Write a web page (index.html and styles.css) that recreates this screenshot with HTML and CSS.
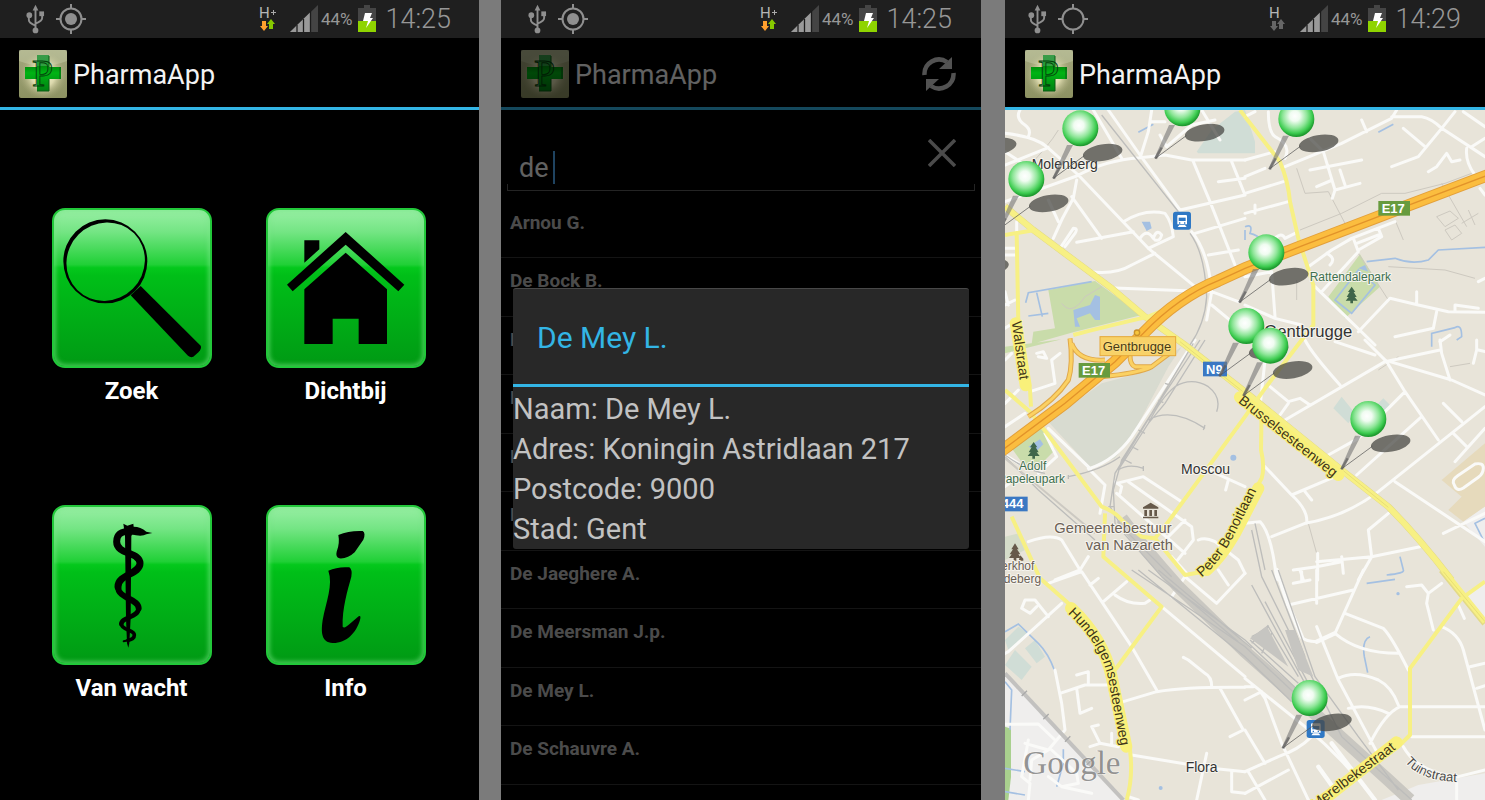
FILE: index.html
```html
<!DOCTYPE html>
<html lang="nl">
<head>
<meta charset="utf-8">
<title>PharmaApp</title>
<link rel="stylesheet" href="styles.css">
</head>
<body>
<svg class="defs" aria-hidden="true">
  <defs>
    <linearGradient id="logo-bg" x1="0" y1="0" x2="0" y2="1"><stop offset="0" stop-color="#a3a77e"/><stop offset="1" stop-color="#8d9262"/></linearGradient>
    <radialGradient id="logo-glow"><stop offset="0" stop-color="#fffde0"/><stop offset=".5" stop-color="#dcd9ad"/><stop offset="1" stop-color="#a3a475" stop-opacity="0"/></radialGradient>
    <linearGradient id="cross" x1="0" y1="0" x2="0" y2="1"><stop offset="0" stop-color="#3a9b49"/><stop offset=".3" stop-color="#2fa041"/><stop offset=".32" stop-color="#008f0d"/><stop offset=".5" stop-color="#00b414"/><stop offset="1" stop-color="#008012"/></linearGradient>
    <radialGradient id="ball" cx=".46" cy=".42" r=".56"><stop offset="0" stop-color="#fff"/><stop offset=".25" stop-color="#f0fcf1"/><stop offset=".6" stop-color="#8fe699"/><stop offset=".85" stop-color="#3dcc50"/><stop offset="1" stop-color="#1f9c30"/></radialGradient>
  </defs>
  <symbol id="usb" viewBox="0 0 20 30">
    <g fill="none" stroke="#8f8f8f" stroke-width="2"><path d="M10 5V26M3 11v5q0 3 7 6M17 9v5q0 3 -7 6"/></g>
    <g fill="#8f8f8f"><path d="M10 0l3 6H7z"/><circle cx="3.500" cy="11" r="3"/><path d="M14 7h5v5h-5z"/><circle cx="10" cy="27" r="3"/></g>
  </symbol>
  <symbol id="gps" viewBox="0 0 30 30">
    <g fill="none" stroke="#8f8f8f" stroke-width="2"><circle cx="15" cy="15" r="10.500"/><path d="M15 0v5M15 25v5M0 15h5M25 15h5"/></g>
  </symbol>
  <symbol id="signal" viewBox="0 0 28 27">
    <path d="M0 27L28 0V27z" fill="#444"/><path d="M0 27L20 7.500V27z" fill="#9a9a9a"/>
    <path d="M7 20v7M13.500 14v13M20.500 6v21" stroke="#1c1c1c" stroke-width="1.300"/>
  </symbol>
  <symbol id="battery" viewBox="0 0 18 27">
    <path d="M6 0h6v3h6v13H0V3h6z" fill="#454545"/><path d="M0 16h18v11H0z" fill="#8fd400"/>
    <path d="M7 8h7l-2 5h3L8 23l2-7H5z" fill="#fff"/>
  </symbol>
  <symbol id="logo" viewBox="0 0 48 48">
    <rect width="48" height="48" rx="2" fill="url(#logo-bg)"/><circle cx="24" cy="25" r="24" fill="url(#logo-glow)"/>
    <path d="M0 0H48V11Q24 20 0 11z" fill="#dfe3c5" opacity=".3"/>
    <path d="M18 5H30V17H42V29H30V41H18V29H6V17H18z" fill="url(#cross)"/><path d="M18 41h12M30 6v11M30 29v12M41 17v12" stroke="#0a5a14" stroke-width="1"/>
    <text x="13" y="36" font-family="Liberation Serif, serif" font-size="38" fill="#07951a" fill-opacity=".3" stroke="#04400b" stroke-width=".9">P</text>
  </symbol>
</svg>

<main class="board">
  <section class="phone phone-menu">
    <div class="status">
      <svg class="ic-usb"><use href="#usb"/></svg>
      <svg class="ic-gps" viewBox="0 0 30 30"><use href="#gps"/><circle cx="15" cy="15" r="6" fill="#8f8f8f"/></svg>
      <svg class="ic-net" viewBox="0 0 18 27"><text class="net-text" x="0" y="13">H</text><path d="M12 7.500h5M14.500 5v5" stroke="#aaa"/><path d="M3 16h4v5h2l-4 5-4-5h2z" fill="#ffa02e"/><path d="M10 24h4v-5h2l-4-5-4 5h2z" fill="#86c800"/></svg>
      <svg class="ic-signal"><use href="#signal"/></svg>
      <span class="percent">44%</span>
      <svg class="ic-battery"><use href="#battery"/></svg>
      <time class="clock">14:25</time>
    </div>
    <header class="appbar"><svg class="logo"><use href="#logo"/></svg><h1>PharmaApp</h1></header>
    <nav class="menu">
      <button class="item"><span class="tile"><svg viewBox="0 0 480 480"><path fill-rule="evenodd" d="M160 34a126 126 0 1 1 0 252a126 126 0 1 1 0-252zM246 76a120 115 -45 0 0 -170 170a120 115 -45 0 0 170-170z"/><path d="M236 262L266 234L446 413Q450 420 440 432L424 446Q416 450 408 443z"/></svg></span><span class="label">Zoek</span></button>
      <button class="item"><span class="tile"><svg viewBox="0 0 480 480"><path d="M115 97H160V124L115 164zM239 72L415 230L397 250L239 110L80 250L63 230zM239 134L363 244V408H278V332H200V408H115V244z"/></svg></span><span class="label">Dichtbij</span></button>
      <button class="item"><span class="tile"><svg viewBox="0 0 480 480"><path d="M214 56l12 6 18-6 2 18 -8 20L236 340 232 415 229 428 225 415 222 340 219 90z"/><path d="M236 66Q262 62 283 80L301 84 283 88Q270 96 236 88z"/><g fill="none" stroke="#000" stroke-linecap="round"><path stroke-width="21" d="M240 78C200 78 194 92 194 110C194 150 264 140 264 175C264 208 198 208 198 245"/><path stroke-width="18" d="M198 245C198 282 260 280 260 310"/><path stroke-width="14" d="M260 310C260 338 208 336 208 357"/><path stroke-width="11" d="M208 357C208 376 247 374 247 390Q247 402 228 406"/><path stroke-width="6" d="M228 406L215 409"/></g></svg></span><span class="label">Van wacht</span></button>
      <button class="item"><span class="tile"><svg viewBox="0 0 480 480"><path d="M217 90Q250 76 290 78Q300 84 292 104L266 142Q245 162 220 160Q208 155 212 140Q222 115 217 90zM187 197Q215 184 250 187Q260 195 256 215C245 255 228 310 230 365Q235 372 250 358L278 334Q286 330 282 345C270 385 240 415 200 414C165 412 165 380 170 345C180 290 202 240 187 197z"/></svg></span><span class="label">Info</span></button>
    </nav>
  </section>

  <section class="phone phone-search">
    <div class="status">
      <svg class="ic-usb"><use href="#usb"/></svg>
      <svg class="ic-gps" viewBox="0 0 30 30"><use href="#gps"/><circle cx="15" cy="15" r="6" fill="#8f8f8f"/></svg>
      <svg class="ic-net" viewBox="0 0 18 27"><text class="net-text" x="0" y="13">H</text><path d="M12 7.500h5M14.500 5v5" stroke="#aaa"/><path d="M3 16h4v5h2l-4 5-4-5h2z" fill="#ffa02e"/><path d="M10 24h4v-5h2l-4-5-4 5h2z" fill="#86c800"/></svg>
      <svg class="ic-signal"><use href="#signal"/></svg>
      <span class="percent">44%</span>
      <svg class="ic-battery"><use href="#battery"/></svg>
      <time class="clock">14:25</time>
    </div>
    <header class="appbar"><svg class="logo"><use href="#logo"/></svg><h1>PharmaApp</h1>
      <button class="refresh" aria-label="Vernieuwen"><svg viewBox="0 0 34 34"><g fill="none" stroke="#ccc" stroke-width="4.500"><path d="M2.500 18A14.500 14.500 0 0 1 25 5"/><path d="M31.500 16A14.500 14.500 0 0 1 9 29"/></g><path d="M30 0V12H17zM4 34V22H17z" fill="#ccc"/></svg></button>
    </header>
    <div class="search">
      <div class="field"><input type="text" value="de " size="2" aria-label="Zoek apotheek"><i class="caret"></i></div>
      <button class="clear" aria-label="Wissen"><svg viewBox="0 0 28 28"><path d="M1 1L27 27M27 1L1 27" stroke="#bbb" stroke-width="3.500"/></svg></button>
    </div>
    <ul class="list">
      <li>Arnou G.</li><li>De Bock B.</li><li>De</li><li>De</li><li>De</li><li>De</li><li>De Jaeghere A.</li><li>De Meersman J.p.</li><li>De Mey L.</li><li>De Schauvre A.</li><li></li>
    </ul>
    <div class="scrim">
      <div class="dialog" role="dialog" aria-labelledby="dialog-title">
        <h2 id="dialog-title">De Mey L.</h2>
        <div class="details"><p>Naam: De Mey L.</p><p>Adres: Koningin Astridlaan 217</p><p>Postcode: 9000</p><p>Stad: Gent</p></div>
      </div>
    </div>
  </section>

  <section class="phone phone-map">
    <div class="status">
      <svg class="ic-usb"><use href="#usb"/></svg>
      <svg class="ic-gps" viewBox="0 0 30 30"><use href="#gps"/></svg>
      <svg class="ic-net" viewBox="0 0 18 27"><text class="net-text" x="0" y="13">H</text><path d="M3 16h4v5h2l-4 5-4-5h2zM10 24h4v-5h2l-4-5-4 5h2z" fill="#666"/></svg>
      <svg class="ic-signal"><use href="#signal"/></svg>
      <span class="percent">44%</span>
      <svg class="ic-battery"><use href="#battery"/></svg>
      <time class="clock">14:29</time>
    </div>
    <header class="appbar"><svg class="logo"><use href="#logo"/></svg><h1>PharmaApp</h1></header>
    <svg class="map" viewBox="0 0 1440 2070" preserveAspectRatio="xMinYMin slice" role="img" aria-label="Kaart van Gentbrugge">
      <defs>
        <g id="pin"><path d="M-40 50L-22 50-76 153-84 150z" fill="#777" opacity=".6"/><path d="M-81 150L12 82" stroke="#555" stroke-width="3" opacity=".7"/><path d="M-81 150L-62 118" stroke="#555" stroke-width="7" opacity=".6"/><ellipse cx="67" cy="73" rx="60" ry="25" transform="rotate(-10 67 73)" fill="#474743" opacity=".74"/><circle r="54" fill="url(#ball)"/></g>
        <g id="train"><rect width="54" height="54" rx="8" fill="#2f78c4"/><path d="M16 10h23q3 0 3 4v24h-29V14q0-4 3-4zM14 46l5-6h17l5 6z" fill="#fff"/><path d="M17 18h21v10H17z" fill="#2f78c4"/><path d="M18 34h4M33 34h4" stroke="#2f78c4" stroke-width="4"/></g>
        <g id="tree"><path d="M0-24L11-8H6L15 7H9L18 18H4V26H-4V18H-18L-9 7H-15L-6-8H-11z" fill="#3f664a"/></g>
        <path id="p-brus" d="M698 876L990 1108"/>
        <path id="p-hund" d="M188 1510Q285 1600 308 1700L350 1925"/>
        <path id="p-tuin" d="M1200 1955Q1245 2015 1370 2016"/>
        <path id="p-pet" d="M590 1402Q636 1366 680 1290L768 1115"/>
        <path id="p-mer" d="M932 2098L1205 1893"/>
        <path id="p-wal" d="M20 636L50 850"/>
      </defs>
      <rect width="1440" height="2070" fill="#e8e4d9"/>
      <g class="areas">
        <g fill="#c9dcaa"><path d="M130 540L270 513 410 615 210 665 80 702 85 665 150 655zM0 710L170 688 0 730zM1065 433L1125 530 1020 625 970 560zM20 1015L110 950 150 1020 100 1070 60 1070z"/></g>
        <g fill="#d0ddd6"><path d="M575 125L620 60 690 5 720 0 750 95V130L580 130zM1010 860L1050 910 1030 940 985 895zM1115 885l20-20 20 20-20 20zM0 1590L40 1550 70 1570 10 1620zM90 1590L120 1640 95 1660 60 1615zM30 1620L80 1670 50 1710 0 1665z"/></g>
        <path d="M130 935L290 820 420 785 530 710 490 770 380 980 330 1045 255 1070z" fill="#d8dbd0"/>
        <path d="M1440 1000L1310 1110 1370 1160 1330 1200 1375 1235 1440 1190z" fill="#e6dabc"/>
        <path d="M0 1690L360 2070H0zM1375 1235L1440 1190V1310zM1370 1465L1440 1415V1530zM1130 2070L1240 2025 1440 1990V2070z" fill="#efeeed"/>
        <path d="M0 1280l40-10 20 50-60 30z" fill="#d5dcc9"/>
        <path d="M0 1850L18 1856V2000L10 2070H0z" fill="#a9d08e"/>
      </g>
      <g class="water">
        <path d="M62 578L70 548 260 515M95 548L112 620M70 618L130 610M400 67L445 43M1085 455L1170 445Q1220 465 1270 450L1300 420 1440 412M1120 67L1165 43M0 1565L40 1542 100 1600Q130 1630 148 1680M0 1715L20 1740 15 1860M0 1975L60 1985M175 1918V1960L155 2030M1145 1395Q1200 1390 1195 1380L1185 1340M1085 1420L1170 1408M1095 1580Q1070 1590 1078 1640L1088 1688M1280 710V670L1350 653Q1370 640 1370 680L1355 690M1440 1225L1410 1240 1435 1290M720 350Q745 340 735 370Q780 380 770 420M0 2045L60 2055M720 360v30"/>
        <path class="loop" d="M1060 480L1110 525 1040 610 990 570z"/>
        <path class="pond" d="M205 600L255 585 270 555 285 560V630L270 630 255 610 215 625 225 650H210zM410 335l25 0 5 20-15 8zM1060 475l20-10 10 20zM70 1010l35-22 10 15-20 20z"/>
        <circle class="pond" cx="685" cy="1043" r="9"/><circle class="pond" cx="467" cy="2034" r="6"/><circle class="pond" cx="1179" cy="1451" r="5"/>
      </g>
      <g class="tracks">
        <path d="M885 360L1010 310 1130 250 1200 250 1320 220 1400 190M875 175L900 250 970 245 1020 340M1150 470L1320 480 1410 505M1295 320L1335 303 1360 325 1320 350zM1320 360l30-15 20 25-30 20zM1370 340l50-30M1390 300l20 45M1310 220L1385 350M1170 330L1195 390M1060 430L1150 570M875 570V510M170 580Q200 620 240 560L290 530M1120 780l60-40M1335 770l60-10M910 1240L935 1330M60 180Q130 110 160 60"/>
      </g>
      <g class="roads">
        <g transform="translate(0 -15)"><path d="M0 85Q90 95 125 125L220 210 430 430 570 545M45 15Q30 40 60 60 80 75 70 95M130 128L0 180M0 140L60 180M0 290L215 213Q300 165 405 158L480 150 560 165H720M265 15L350 160M310 15L405 150 525 315M440 15L430 80 408 150M200 275L290 400M215 225L205 280Q170 340 145 400M130 285L160 350M215 412L385 380M355 350Q420 310 480 325 500 350 505 395L430 430M405 400q20-30 40 0q10-30 25-10q-5 20-20 15M255 500Q330 510 380 480L450 445M570 385L720 340M525 315L720 270M565 170L615 290 690 480M680 170L720 270M610 450L700 435M560 380Q610 440 620 560L605 645M620 600L680 650M310 548L620 560 700 590M165 430L205 370q15 0 5 15L180 425M0 430H35M0 450H35M35 350V385M640 230L720 220M465 90L485 125 560 60 630 45M590 15L645 105M0 600l30-15M0 560l10 40M0 670l30-20M440 50h40"/></g>
        <g transform="translate(720 -15)"><path d="M0 215L60 190M120 185L290 115 440 40 455 15M440 35H530Q560 40 590 70L720 155M630 20L590 70 520 155 440 185M475 70L540 125M350 45L365 80M550 200L575 185 605 145 620 170 645 165M720 100L680 125M655 20L720 65M665 130Q660 170 690 210M195 100L235 140 270 255 262 280M195 195L350 165M215 245L255 228M285 195L300 240M270 255L345 235M0 265L115 230M0 325L130 290M30 325V300M70 20Q70 80 90 95 140 120 120 160M0 165L90 140M0 35L30 20M190 485L260 435 320 400 450 350M325 400L340 440 230 560M340 435L410 395 400 370M335 415L400 390M245 445q30 15 10 35M210 545L390 720M340 680L435 580 520 600 610 620 720 622M515 560V595M575 620L565 670 450 695M630 620V600L700 610M80 500L90 635M0 600L90 640 170 660M0 515L80 500M90 400q20-20 30 0L150 385M705 250l15 20M585 710l30-20M700 530l20-10"/></g>
        <g transform="translate(0 690)"><path d="M570 0L380 290Q330 360 255 385L130 265M75 155L150 130 140 60 165 40M95 40L115 35 125 55 100 50M0 190L40 150M0 60L20 40M0 260L60 220M250 385L300 435 285 520M0 345L40 370M100 400L155 350 120 280M335 430L415 410 530 485M370 425L560 560 565 600 510 670M335 460L540 640M490 590L540 540M580 600Q600 590 630 605L700 660 720 700M545 700L500 650M610 390L720 440M670 420L662 450M70 605Q140 580 170 600L225 690 150 720M0 440L20 425M330 425L350 440 345 460M225 690L250 650"/></g>
        <g transform="translate(720 690)"><path d="M180 0Q200 40 285 135M120 240L420 65 585 30M270 5L390 45 M435 65L620 120 720 165M360 0L425 65 480 155 580 300M585 0L590 40 615 120M695 0V30L685 70M700 30L720 35M250 345L340 295 480 155M335 405L530 230M720 200L400 455Q300 530 180 550L80 590M595 190L650 245M625 280L665 320M720 265L630 365M450 425L720 605M720 520L595 580M60 380L140 465Q190 510 185 550M140 465L270 410M180 455L200 480M0 550L45 545Q80 580 95 720M525 620L380 650 215 665M430 520L370 570 380 650 340 720M145 690L215 680 290 665M290 650L295 700M218 640V720M165 690l10 30M75 140L130 185 165 175 195 195M130 190L105 225M60 60L45 200"/><path d="M628 435q-10-15 10-28L690 372q25-5 25 12t-15 28l-45 32q-20 12-27-9z" fill="#d0ddd6"/></g>
        <g transform="translate(0 1380)"><path d="M130 40L230 5 380 230 455 360M295 95L365 35M330 75Q370 105 420 100L435 90M470 110L720 320M170 100L10 245 0 250M130 140L90 90 60 90 50 115 75 130 95 110M255 45L280 25M355 395L455 365Q550 350 720 352M645 355L715 480 675 500M620 350Q620 320 600 310L550 270 535 262M165 370L240 345 310 345M150 300L170 400 180 480 130 540M250 340V305L215 315M215 355L225 430 260 415M0 463L100 462 150 510M380 555L620 595 720 605M605 550L575 690M680 605V665L720 670M255 530L285 520 340 530M285 520L260 470 280 465M320 490V520M540 20L635 100 720 10M640 0L670 45M540 20L500 80M70 510L50 620 75 640 70 690M130 540L60 520M130 540L80 570 75 630M140 540L215 610 220 640 170 650 130 620M170 650L260 670M370 680L400 690"/></g>
        <g transform="translate(720 1380)"><path d="M95 0L130 105 170 200Q180 215 215 215L270 190 355 0M130 105L325 60M215 0V100M215 170L280 330 395 545M300 130L415 175Q440 200 490 300M270 190Q340 250 460 250M280 325Q330 300 400 330 440 350 460 405M310 415Q370 400 430 430M375 520Q420 430 465 410H720M500 500H720M0 325L180 470Q300 570 390 690M60 385L110 520 190 690M0 480L60 580M0 605L100 560Q160 540 200 500M0 670L130 600M10 605L60 690M220 590L270 660M590 170Q640 190 655 240L720 480M675 290L720 280M695 355L720 347M550 70L545 100 565 180M485 50L530 45 550 70 590 40M640 105L658 145M475 530Q520 610 640 620L720 600M635 640V690M0 350H25M0 390L50 365M60 385L50 370M145 40L195 30M170 5v30"/><path class="wide" d="M95 0L130 105 170 200M215 215L270 190M260 520L390 690M220 590L270 660"/></g>
      </g>
      <g class="rails">
        <path class="heavy" d="M350 1225Q420 1320 520 1430L720 1625 890 1775 1150 2010 1215 2070"/>
        <path class="lines" d="M585 690L450 895 330 1090 315 1190 350 1250 500 1400M565 700L440 910 350 1050 325 1140 330 1240 470 1400M600 690L480 880 430 940 340 1080M380 1380L560 1500 720 1610 880 1760M430 1380L720 1590 900 1760M400 1380L720 1640 860 1775M460 1380L740 1615M470 1400L700 1595M740 1425L900 1720M770 1400L920 1700 1010 1880 1220 2070M800 1380L900 1640M820 1380L930 1700 1060 1880 1180 2040M780 1475L910 1720M735 1590L880 1720M740 1600L790 1550 880 1700M740 1580Q780 1560 790 1545M770 1630L800 1570M340 1080Q370 1060 415 1075M430 940Q470 860 510 830Q560 800 610 830Q650 860 635 905M430 930Q500 890 600 955M600 945l-5 15M415 1068v15M120 1090Q60 1080 0 1035M190 1100Q290 1080 345 1040M0 1040L100 1140 270 1290M290 15L520 305M555 370Q600 430 605 560 600 640 555 705M480 820l15 5M460 870l15 8M400 960l20 10M380 1010l20 10M360 1050l20 10M310 1190h16M190 1095v12M750 1240L780 1380M740 1260L770 1400"/>
        <path class="yard" d="M735 1585L785 1548 850 1670zM840 1560L870 1560 925 1700 880 1680z"/>
        <path class="single" d="M0 1690L355 2070"/><path class="ticks" d="M50 1758l16-16M115 1828l16-16M180 1895l16-16M245 1965l16-16"/>
        <path class="thin" d="M0 1045L270 1270"/>
      </g>
      <g class="yellow-edge"><path d="M0 290L85 360 320 535 420 620 540 705 720 845 1010 1080 1150 1190Q1240 1280 1340 1410M1310 1380L1440 1540"/></g>
      <g class="yellow">
        <path class="main" d="M0 290L85 360 320 535 420 620 540 705 720 845 1010 1080 1150 1190Q1240 1280 1340 1410"/>
        <path class="main" d="M1315 1380L1440 1535"/>
        <path class="mid" d="M35 370L40 640 75 840 78 890M0 375L90 360M0 840L75 905 130 975 290 1190Q330 1205 350 1230L410 1280 450 1285 490 1235 720 920 780 835 890 690 925 645 925 525 880 385 855 275Q850 215 825 155L790 110 720 20M205 675Q300 650 430 620 500 595 530 555M450 1285L540 1395 590 1386 650 1320 770 1105Q780 1070 768 1020L770 890M300 1210L295 1340 470 1490 330 1680M20 1220L105 1405 190 1480Q290 1580 320 1680L350 1810 375 1920Q385 2000 365 2070M1440 1415L1370 1465 1215 1675V1875L1180 1910 950 2080M705 0L720 20"/>
      </g>
      <g class="double"><path d="M525 695L720 850M1315 1385L1440 1535M1015 1082L1150 1192"/></g>
      <g class="ramps-edge"><path d="M195 685Q205 760 190 810 150 870 70 920M200 700Q220 755 300 750M290 800Q400 790 440 770L500 725M375 735Q375 765 390 770L440 770M720 478L600 530"/></g>
      <g class="ramps"><path d="M195 685Q205 760 190 810 150 870 70 920M200 700Q220 755 300 750M290 800Q400 790 440 770L500 725M375 735Q375 765 390 770L440 770"/></g>
      <g class="highway">
        <path class="hw-edge" d="M-10 1022L180 880 330 755 415 670Q520 560 640 512L720 475 885 410 1120 320 1450 195"/>
        <path class="hw-fill" d="M-10 1022L180 880 330 755 415 670Q520 560 640 512L720 475 885 410 1120 320 1450 195"/>
        <path class="hw-line" d="M-10 1022L180 880 330 755 415 670Q520 560 640 512L720 475 885 410 1120 320 1450 195"/>
      </g>
      <g class="halo">
        <path d="M198 1494Q295 1585 320 1700L364 1910M705 862L1000 1095M605 1380Q650 1340 690 1270L760 1135M948 2075L1175 1897M32 640L62 826"/>
      </g>
      <g class="signs">
        <rect x="285" y="680" width="227" height="57" fill="#f8d268" stroke="#e5a83a" stroke-width="3"/><circle cx="396" cy="668" r="8" fill="#f7c63e" stroke="#c9912a" stroke-width="4"/>
        <rect x="1120" y="273" width="95" height="44" fill="#679b3e"/><rect x="221" y="759" width="94" height="44" fill="#679b3e"/>
        <rect x="594" y="755" width="72" height="44" fill="#3b78c3"/><rect x="-30" y="1160" width="98" height="44" fill="#3b78c3"/>
        <text x="1130" y="308">E17</text><text x="231" y="794">E17</text><text x="603" y="791">N9</text><text x="-10" y="1195">444</text>
      </g>
      <use href="#train" x="504" y="305"/><use href="#train" x="905" y="1830"/>
      <use href="#tree" x="1040" y="554"/><use href="#tree" x="86" y="1020"/>
      <path d="M30 1300L41 1318H36L46 1333H40L48 1344H34V1352H26V1344H12L20 1333H14L24 1318H19zM46 1336l9 10v6h-14zM414 1192L437 1178 460 1192V1196H414zM418 1200h8v18h-8zM433 1200h8v18h-8zM448 1200h8v18h-8zM414 1220h46v5h-46z" fill="#66594a"/>
      <g class="labels">
        <text class="place" x="80" y="177">Molenberg</text><text class="town" x="778" y="680">Gentbrugge</text><text class="place" x="528" y="1093">Moscou</text><text class="place" x="542" y="1985">Flora</text>
        <text class="poi" x="148" y="1269">Gemeentebestuur</text><text class="poi" x="242" y="1319">van Nazareth</text>
        <text class="park" x="914" y="514">Rattendalepark</text><text class="park" x="42" y="1079">Adolf</text><text class="park" x="-22" y="1119">Papeleupark</text>
        <text class="poi small" x="-36" y="1379">Kerkhof</text><text class="poi small" x="-44" y="1420">Ledeberg</text>
        <text class="exit" x="293" y="722">Gentbrugge</text>
        <text class="street"><textPath href="#p-brus">Brusselsesteenweg</textPath></text><text class="street"><textPath href="#p-hund">Hundelgemsesteenweg</textPath></text>
        <text class="street"><textPath href="#p-pet">Peter Benoitlaan</textPath></text><text class="street"><textPath href="#p-mer">Merelbekestraat</textPath></text><text class="street"><textPath href="#p-wal">Walstraat</textPath></text>
        <text class="lane"><textPath href="#p-tuin">Tuinstraat</textPath></text>
      </g>
      <text class="google" x="55" y="1992">Google</text>
      <use href="#pin" x="-92" y="37"/><use href="#pin" x="-115" y="399"/><use href="#pin" x="532" y="-5"/><use href="#pin" x="226" y="55"/><use href="#pin" x="64" y="207"/><use href="#pin" x="874" y="27"/><use href="#pin" x="784" y="427"/><use href="#pin" x="724" y="648"/><use href="#pin" x="796" y="707"/><use href="#pin" x="1090" y="927"/><use href="#pin" x="914" y="1764"/>
    </svg>
  </section>
</main>
</body>
</html>
```

FILE: styles.css
```css
* { box-sizing: border-box; }
body { margin: 0; background: #7b7b7b; font-family: Roboto, "Liberation Sans", sans-serif; }
button { padding: 0; border: 0; background: none; font: inherit; color: inherit; }
h1, h2, p, ul { margin: 0; padding: 0; font-weight: 400; }
svg { display: block; flex: none; }
.defs { position: absolute; width: 0; height: 0; }

.board { display: grid; grid-template-columns: 479fr 22px 480fr 24px 480fr; height: 100vh; min-height: 640px; }
.phone { position: relative; display: flex; flex-direction: column; overflow: hidden; background: #000; }
.phone-menu { grid-column: 1; }
.phone-search { grid-column: 3; }
.phone-map { grid-column: 5; }

.status { display: flex; flex: none; align-items: center; height: 38px; padding: 0 28px 1px 26px; background: #1f1f1f; color: #979797; }
.phone-search .status { padding: 0 29px 1px 27px; }
.phone-map .status { padding: 0 24px 1px 23px; }
.ic-usb { width: 19px; height: 30px; }
.ic-gps { width: 30px; height: 30px; margin-left: 11px; }
.ic-net { width: 18px; height: 27px; margin-left: auto; overflow: visible; }
.net-text { font: 400 15px Roboto, sans-serif; fill: #b5b5b5; }
.ic-signal { width: 28px; height: 27px; margin-left: 13px; }
.percent { width: 40px; padding-left: 3px; font-size: 17px; line-height: 20px; }
.ic-battery { width: 18px; height: 27px; }
.clock { width: 75px; text-align: right; font-size: 27px; line-height: 32px; font-weight: 300; }

.appbar { display: flex; flex: none; align-items: center; height: 72px; padding: 2px 25px 0 19px; border-bottom: 3px solid #33b5e5; }
.phone-search .appbar, .phone-map .appbar { padding-left: 20px; }
.logo { width: 48px; height: 48px; }
.appbar h1 { margin-left: 6px; padding-top: 2px; color: #f3f3f3; font-size: 27px; line-height: 36px; }
.refresh { width: 34px; height: 34px; margin-left: auto; }

.menu { display: grid; grid-template-columns: 160px 160px; gap: 98px 54px; justify-content: center; padding: 98px 2px 0 0; }
.item { display: flex; flex-direction: column; gap: 7px; color: #fff; }
.tile { display: block; width: 160px; height: 160px; border: 2px solid #22c83a; border-radius: 13px; background: linear-gradient(#98efa4, #74e584 14%, #20d036 35%, #04c81c 37%, #00bf18 42%, #009a14); box-shadow: inset 0 0 4px 2px rgba(120, 230, 135, .55); }
.tile svg { width: 160px; height: 160px; margin: -2px; }
.label { display: block; width: 160px; font-size: 24px; line-height: 32px; font-weight: 700; text-align: center; }

.search { display: flex; flex: none; height: 81px; margin: 0 6px; padding: 0 19px 0 12px; justify-content: space-between; background: linear-gradient(#5a5a5a, #5a5a5a) left bottom / 1px 6px no-repeat, linear-gradient(#5a5a5a, #5a5a5a) right bottom / 1px 6px no-repeat; border-bottom: 1px solid #5a5a5a; }
.field { display: flex; align-items: center; padding-top: 34px; }
.field input { width: 34px; height: 38px; padding: 2px 0 0; border: 0; outline: 0; background: none; color: #f3f3f3; font: 27px/36px Roboto, sans-serif; }
.caret { width: 2px; height: 33px; background: #4fa8f0; }
.clear { width: 28px; height: 28px; margin-top: 29px; }
.list { list-style: none; padding-top: 9px; }
.list li { height: 58px; padding: 10px 9px 0; border-bottom: 1px solid #343434; color: #bbb; font-size: 19px; line-height: 26px; font-weight: 700; }
.list li:nth-child(even) { height: 59px; }

.scrim { position: absolute; inset: 38px 0 0; display: flex; align-items: center; padding: 0 12px 2px; background: rgba(0, 0, 0, .6); }
.dialog { flex: 1; border-top: 1px solid #484848; border-radius: 3px; background: #282828; }
.dialog h2 { padding: 29px 24px 26px; border-bottom: 3px solid #33b5e5; color: #33b5e5; font-size: 30px; line-height: 40px; }
.details { padding: 2px 0 0; color: #c2c2c2; font-size: 29px; line-height: 40px; }

.map { flex: 1; width: 100%; min-height: 0; font-family: "Liberation Sans", sans-serif; }
.water path { fill: none; stroke: #a4c0e2; stroke-width: 5; }
.water .pond, circle.pond { fill: #a4c0e2; stroke: none; }
.tracks path { fill: none; stroke: #cdc9c0; stroke-width: 3; }
.roads path { fill: none; stroke: #fafaf8; stroke-width: 9; stroke-linecap: round; stroke-linejoin: round; }
.roads .wide { stroke-width: 13; }
.rails path { fill: none; stroke: #bdbdbb; stroke-width: 4; }
.rails .heavy { stroke: #c9c7c1; stroke-width: 38; }
.rails .yard { fill: #c6c5c1; stroke: none; }
.rails .single { stroke: #c2c1bf; stroke-width: 12; }
.rails .ticks { stroke: #aaa; }
.rails .thin { stroke: #ccc9c2; stroke-width: 6; }
.yellow-edge path { fill: none; stroke: #e3da86; stroke-width: 20; }
.yellow path { fill: none; stroke: #f7f084; stroke-width: 12; stroke-linejoin: round; }
.yellow .main { stroke-width: 17; }
.double path { fill: none; stroke: #e0d56c; stroke-width: 2; }
.ramps-edge path { fill: none; stroke: #e0a84a; stroke-width: 15; }
.ramps path { fill: none; stroke: #fbd163; stroke-width: 9; }
.highway path { fill: none; }
.highway .hw-edge { stroke: #e3a03a; stroke-width: 37; }
.highway .hw-fill { stroke: #fbbd3f; stroke-width: 31; }
.highway .hw-line { stroke: #e2932a; stroke-width: 4; }
.halo path { fill: none; stroke: #f9f07a; stroke-width: 36; stroke-linecap: round; }
.signs text { fill: #fff; font-size: 39px; font-weight: 700; }
.labels text { font-size: 42px; paint-order: stroke; stroke: #f6f4ee; stroke-width: 6px; stroke-linejoin: round; fill: #4a4a4a; }
.labels .place, .labels .town { fill: #333; }
.labels .town { font-size: 50px; }
.labels .poi { fill: #6b6156; font-size: 44px; }
.labels .park { fill: #3f704e; font-size: 36px; }
.labels .small { font-size: 36px; }
.labels .exit { font-size: 39px; fill: #4a3a10; stroke: #fbe08c; stroke-width: 3px; }
.labels .street { fill: #3f3518; stroke: #f9f07a; }
.labels .lane { font-size: 39px; }
.google { font-family: "Liberation Serif", serif; font-size: 99px; fill: #7a7a7a; fill-opacity: .8; paint-order: stroke; stroke: #fff; stroke-opacity: .6; stroke-width: 3px; }
```
